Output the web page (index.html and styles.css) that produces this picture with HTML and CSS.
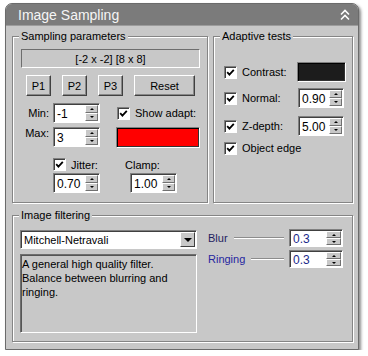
FILE: index.html
```html
<!DOCTYPE html>
<html lang="en">
<head>
  <meta charset="UTF-8" />
  <title>Image Sampling</title>
  <link rel="stylesheet" href="styles.css">
</head>
<body>
  <div class="rollout">
    <div class="title-bar">
      <span>Image Sampling</span>
      <svg class="collapse" width="10" height="12" viewBox="0 0 10 12">
        <path d="M1 5.5 L5 1.5 L9 5.5 M1 10.5 L5 6.5 L9 10.5" stroke="#fff" stroke-width="1.6" fill="none"/>
      </svg>
    </div>

    <div class="rollout-body">
      <div class="top-row">
        <div class="group sampling">
          <span class="group-title">Sampling parameters</span>
          <div class="status">[-2 x -2] [8 x 8]</div>

          <div class="btn-row">
            <button class="btn">P1</button>
            <button class="btn">P2</button>
            <button class="btn">P3</button>
            <button class="btn wide">Reset</button>
          </div>

          <div class="field-row">
            <span class="field-label">Min:</span>
            <div class="spinner">
              <span class="spin-value">-1</span>
              <span class="spin-btns"><span class="up"></span><span class="down"></span></span>
            </div>
            <span class="check adapt"><svg width="9" height="9" viewBox="0 0 9 9"><path d="M1.2 4.2 L3.4 6.6 L7.8 1.8" stroke="#000" stroke-width="1.8" fill="none"/></svg></span>
            <span class="check-label">Show adapt:</span>
          </div>

          <div class="field-row max-row">
            <span class="field-label">Max:</span>
            <div class="spinner">
              <span class="spin-value">3</span>
              <span class="spin-btns"><span class="up"></span><span class="down"></span></span>
            </div>
            <span class="swatch red"></span>
          </div>

          <div class="jitter-row">
            <span class="jitter-cell">
              <span class="check"><svg width="9" height="9" viewBox="0 0 9 9"><path d="M1.2 4.2 L3.4 6.6 L7.8 1.8" stroke="#000" stroke-width="1.8" fill="none"/></svg></span>
              <span class="check-label">Jitter:</span>
            </span>
            <span>Clamp:</span>
          </div>

          <div class="jitter-spinners">
            <div class="spinner">
              <span class="spin-value">0.70</span>
              <span class="spin-btns"><span class="up"></span><span class="down"></span></span>
            </div>
            <div class="spinner">
              <span class="spin-value">1.00</span>
              <span class="spin-btns"><span class="up"></span><span class="down"></span></span>
            </div>
          </div>
        </div>

        <div class="group adaptive">
          <span class="group-title">Adaptive tests</span>

          <div class="test-row">
            <span class="check"><svg width="9" height="9" viewBox="0 0 9 9"><path d="M1.2 4.2 L3.4 6.6 L7.8 1.8" stroke="#000" stroke-width="1.8" fill="none"/></svg></span>
            <span class="test-label">Contrast:</span>
            <span class="swatch black"></span>
          </div>

          <div class="test-row normal">
            <span class="check"><svg width="9" height="9" viewBox="0 0 9 9"><path d="M1.2 4.2 L3.4 6.6 L7.8 1.8" stroke="#000" stroke-width="1.8" fill="none"/></svg></span>
            <span class="test-label">Normal:</span>
            <div class="spinner short">
              <span class="spin-value">0.90</span>
              <span class="spin-btns"><span class="up"></span><span class="down"></span></span>
            </div>
          </div>

          <div class="test-row zdepth">
            <span class="check"><svg width="9" height="9" viewBox="0 0 9 9"><path d="M1.2 4.2 L3.4 6.6 L7.8 1.8" stroke="#000" stroke-width="1.8" fill="none"/></svg></span>
            <span class="test-label">Z-depth:</span>
            <div class="spinner short">
              <span class="spin-value">5.00</span>
              <span class="spin-btns"><span class="up"></span><span class="down"></span></span>
            </div>
          </div>

          <div class="test-row edge">
            <span class="check"><svg width="9" height="9" viewBox="0 0 9 9"><path d="M1.2 4.2 L3.4 6.6 L7.8 1.8" stroke="#000" stroke-width="1.8" fill="none"/></svg></span>
            <span class="test-label free">Object edge</span>
          </div>
        </div>
      </div>

      <div class="group filtering">
        <span class="group-title">Image filtering</span>
        <div class="filter-left">
          <div class="dropdown">
            <span class="dropdown-value">Mitchell-Netravali</span>
            <span class="dropdown-btn"><span class="arrow-down"></span></span>
          </div>
          <div class="description">A general high quality filter.<br>Balance between blurring and<br>ringing.</div>
        </div>
        <div class="filter-right">
          <div class="param-row">
            <span class="param-label blur">Blur</span>
            <span class="rule"></span>
            <div class="spinner param">
              <span class="spin-value">0.3</span>
              <span class="spin-btns"><span class="up"></span><span class="down"></span></span>
            </div>
          </div>
          <div class="param-row">
            <span class="param-label ringing">Ringing</span>
            <span class="rule"></span>
            <div class="spinner param">
              <span class="spin-value">0.3</span>
              <span class="spin-btns"><span class="up"></span><span class="down"></span></span>
            </div>
          </div>
        </div>
      </div>
    </div>
  </div>
</body>
</html>
```

FILE: styles.css
```css
:root {
  --face: #c8c8c8;
  --title: #7b7b7b;
  --dark: #404040;
  --shade: #858585;
}

body {
  margin: 0;
  background: #fff;
  font-family: 'Liberation Sans', Arial, sans-serif;
  font-size: 11px;
  color: #000;
}

.rollout {
  margin: 3px 0 0 5px;
  width: 354px;
  height: 347px;
  box-sizing: border-box;
  border: 1px solid #6b6b6b;
  border-radius: 7px 7px 0 0;
  background: var(--face);
  box-shadow: 2px 2px 3px rgba(0,0,0,0.45);
  display: flex;
  flex-direction: column;
  overflow: hidden;
}

.title-bar {
  height: 21px;
  flex-shrink: 0;
  background: var(--title);
  color: #f5f5f5;
  font-size: 14px;
  display: flex;
  align-items: center;
  justify-content: space-between;
  padding: 0 8px 0 12px;
  border-bottom: 1px solid #9c9c9c;
}

.rollout-body {
  padding: 10px 5px 0 6px;
}

.top-row {
  display: flex;
  gap: 5px;
  height: 167px;
}

/* etched group box */
.group {
  position: relative;
  box-sizing: border-box;
  border: 1px solid var(--shade);
  box-shadow: 1px 1px 0 #fff, inset 1px 1px 0 #fff;
}

.group-title {
  position: absolute;
  top: -8px;
  left: 6px;
  padding: 0 2px;
  line-height: 14px;
  background: var(--face);
}

.sampling {
  width: 196px;
  padding: 12px 7px 0 8px;
}

.adaptive {
  flex: 1;
  padding: 25px 0 0 10px;
}

.status {
  height: 19px;
  box-sizing: border-box;
  border: 1px solid;
  border-color: #6e6e6e #fff #fff #6e6e6e;
  display: flex;
  align-items: center;
  justify-content: center;
}

.btn-row {
  display: flex;
  gap: 11px;
  margin: 7px 0 0 5px;
}

.btn {
  width: 25px;
  height: 21px;
  box-sizing: border-box;
  padding: 0;
  border: 1px solid;
  border-color: #fff var(--dark) var(--dark) #fff;
  box-shadow: inset -1px -1px 0 #888;
  background: var(--face);
  font: inherit;
  color: #000;
}

.btn.wide {
  width: 61px;
}

.field-row {
  display: flex;
  align-items: center;
  margin-top: 7px;
  height: 20px;
}

.max-row {
  margin-top: 4px;
  align-items: flex-start;
  height: 21px;
}

.field-label {
  width: 28px;
  text-align: right;
  margin-right: 4px;
}

/* spinner control */
.spinner {
  width: 47px;
  height: 20px;
  box-sizing: border-box;
  display: flex;
  background: #fff;
  border: 1px solid;
  border-color: #808080 #fff #fff #808080;
  box-shadow: inset 1px 1px 0 var(--dark);
}

.spinner.short {
  width: 46px;
  margin-left: 1px;
}

.spinner.param {
  width: 54px;
  height: 18px;
}

.spin-value {
  flex: 1;
  display: flex;
  align-items: center;
  padding: 1px 0 0 3px;
  font-size: 12px;
}

.spin-btns {
  width: 13px;
  margin: 1px 1px 1px 0;
  display: flex;
  flex-direction: column;
}

.param .spin-btns {
  width: 15px;
}

.spin-btns span {
  flex: 1;
  display: flex;
  align-items: center;
  justify-content: center;
  background: var(--face);
  border: 1px solid;
  border-color: #fff #707070 #707070 #fff;
}

.spin-btns .up::after,
.spin-btns .down::after {
  content: '';
  border-left: 2px solid transparent;
  border-right: 2px solid transparent;
}

.spin-btns .up::after {
  border-bottom: 2px solid #000;
}

.spin-btns .down::after {
  border-top: 2px solid #000;
}

/* checkbox */
.check {
  width: 13px;
  height: 13px;
  box-sizing: border-box;
  flex-shrink: 0;
  display: flex;
  align-items: center;
  justify-content: center;
  background: #fff;
  border: 1px solid;
  border-color: #808080 #fff #fff #808080;
  box-shadow: inset 1px 1px 0 var(--dark);
}

.check.adapt {
  margin-left: 17px;
}

.check-label {
  margin-left: 5px;
}

.swatch {
  box-sizing: border-box;
  border: 1px solid;
  border-color: #808080 #fff #fff #808080;
  box-shadow: inset 1px 1px 0 #000, inset -1px -1px 0 #333;
}

.swatch.red {
  width: 84px;
  height: 21px;
  margin-left: 16px;
  background: #ff0000;
}

.swatch.black {
  width: 49px;
  height: 20px;
  background: #1c1c1c;
}

.jitter-row {
  display: flex;
  align-items: center;
  margin: 10px 0 0 32px;
  height: 13px;
}

.jitter-cell {
  display: flex;
  align-items: center;
  width: 72px;
}

.jitter-spinners {
  display: flex;
  gap: 30px;
  margin: 2px 0 0 32px;
}

.test-row {
  display: flex;
  align-items: center;
  height: 20px;
}

.test-row.normal { margin-top: 6px; }
.test-row.zdepth { margin-top: 8px; }
.test-row.edge { margin-top: 2px; }

.test-label {
  width: 55px;
  margin-left: 5px;
}

.test-label.free {
  width: auto;
  white-space: nowrap;
}

.filtering {
  display: flex;
  margin-top: 12px;
  height: 127px;
  padding: 14px 0 0 7px;
}

.filter-left {
  width: 177px;
}

.dropdown {
  height: 19px;
  box-sizing: border-box;
  display: flex;
  background: #fff;
  border: 1px solid;
  border-color: #808080 #fff #fff #808080;
  box-shadow: inset 1px 1px 0 var(--dark);
}

.dropdown-value {
  flex: 1;
  display: flex;
  align-items: center;
  padding-left: 3px;
}

.dropdown-btn {
  width: 15px;
  margin: 1px 1px 1px 0;
  display: flex;
  align-items: center;
  justify-content: center;
  background: var(--face);
  box-sizing: border-box;
  border: 1px solid;
  border-color: #fff var(--dark) var(--dark) #fff;
}

.arrow-down {
  border-left: 4px solid transparent;
  border-right: 4px solid transparent;
  border-top: 4px solid #000;
}

.description {
  margin-top: 5px;
  height: 79px;
  box-sizing: border-box;
  padding: 2px 0 0 1px;
  line-height: 14px;
  border: 1px solid;
  border-color: #6e6e6e #fff #fff #6e6e6e;
  box-shadow: inset 1px 1px 0 #555;
}

.filter-right {
  width: 135px;
  margin: -1px 0 0 11px;
}

.param-row {
  display: flex;
  align-items: center;
  height: 18px;
  margin-bottom: 3px;
}

.param-label.blur { color: #1e1e60; }
.param-label.ringing { color: #2626a0; }

.param .spin-value {
  color: #1a2a8a;
}

.rule {
  flex: 1;
  margin: 0 5px 0 6px;
  border-top: 1px solid #8c8c8c;
  border-bottom: 1px solid #fff;
}
```
